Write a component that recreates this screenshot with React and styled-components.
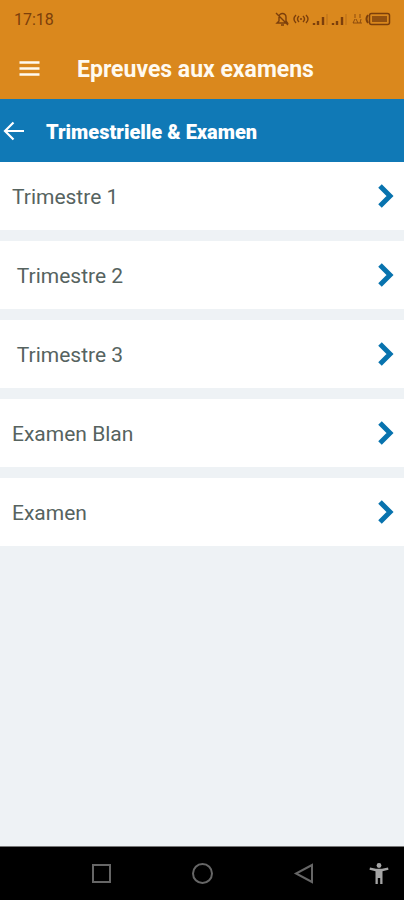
import React from "react";
import styled, { createGlobalStyle } from "styled-components";

const GlobalStyle = createGlobalStyle`
  * {
    box-sizing: border-box;
  }

  body {
    margin: 0;
    font-family: Roboto, "Liberation Sans", sans-serif;
    background-color: #eef2f5;
  }

  button {
    border: 0;
    padding: 0;
    background: none;
    font: inherit;
    color: inherit;
    cursor: pointer;
  }

  svg {
    display: block;
  }
`;

const Screen = styled.div`
  min-height: 100vh;
  display: flex;
  flex-direction: column;
`;

const StatusBar = styled.div`
  height: 38px;
  padding: 0 13px 0 14px;
  display: flex;
  align-items: center;
  justify-content: space-between;
  background-color: #da881d;
  color: #7c3f0b;
`;

const Clock = styled.time`
  padding-top: 2px;
  font-size: 16px;
  line-height: 20px;
`;

const AppBar = styled.header`
  height: 61px;
  padding: 0 18px;
  display: flex;
  align-items: center;
  gap: 36px;
  background-color: #da881d;
  color: #fffaf0;
`;

const IconButton = styled.button`
  flex: none;
  display: flex;
`;

const Title = styled.h1`
  margin: 0;
  padding-top: 2px;
  font-size: 23px;
  line-height: 28px;
  font-weight: 700;
`;

const SubBar = styled.div`
  height: 63px;
  padding: 0 3px;
  display: flex;
  align-items: center;
  gap: 20px;
  background-color: #1079b6;
  color: #fff;
`;

const Subtitle = styled.h2`
  margin: 0;
  padding-top: 2px;
  font-size: 20px;
  line-height: 28px;
  font-weight: 900;
`;

const List = styled.ul`
  flex: 1;
  margin: 0;
  padding: 0;
  list-style: none;
  display: flex;
  flex-direction: column;
  gap: 11px;
`;

const Row = styled.button`
  width: 100%;
  height: 68px;
  padding: 0 10px 0 12px;
  display: flex;
  align-items: center;
  justify-content: space-between;
  background-color: #fff;
  color: #56635f;
  font-size: 21px;
  line-height: 28px;
  text-align: left;
`;

const Label = styled.span`
  padding-top: 2px;
  white-space: pre;
`;

const NavBar = styled.nav`
  height: 54px;
  display: grid;
  grid-template-columns: 2fr 2fr 2fr 1fr;
  padding-left: 12.5%;
  align-items: center;
  justify-items: center;
  border-top: 1px solid #777;
  background-color: #000;
  color: #666;
`;

// some labels come with a leading space, and it shows
const items = [
  "Trimestre 1",
  " Trimestre 2",
  " Trimestre 3",
  "Examen Blan",
  "Examen",
];

const StatusIcons = () => (
  <svg width="117" height="18" viewBox="0 0 117 18" fill="none" stroke="currentColor">
    {/* muted bell */}
    <path d="M3 13h10.500l-1.500-2V7a3.500 3.500 0 0 0-7 0v4zM7 15h3M2 3l12 12" strokeWidth="1.400" />
    {/* vibration */}
    <path d="M22 5q-4 4 0 8M32 5q4 4 0 8M25 6q-3 3 0 6M29 6q3 3 0 6" strokeWidth="1.400" />
    <circle cx="27" cy="9" r="1" fill="currentColor" stroke="none" />
    {/* two signal meters */}
    <path d="M40 15v-2M44 15v-4M49 15V7" strokeWidth="2.400" />
    <path d="M53 15V4" strokeWidth="1" opacity="0.35" />
    <path d="M59 15v-2M63 15v-4M68 15V7" strokeWidth="2.400" />
    <path d="M72 15V4" strokeWidth="1" opacity="0.35" />
    {/* data rate */}
    <path d="M79 13l2-4M84 13l-2-4M81 4v4M86 4v4M86 13l1-4M79 13h9" strokeWidth="1" opacity="0.8" />
    {/* battery */}
    <path d="M94 5q-3 4 0 8" strokeWidth="2" />
    <rect x="95.500" y="3.500" width="20" height="11" rx="2" strokeWidth="1.500" />
    <rect x="98" y="6" width="15" height="6" fill="currentColor" stroke="none" opacity="0.75" />
  </svg>
);

const MenuIcon = () => (
  <svg width="23" height="18" viewBox="0 0 23 18" stroke="currentColor" strokeWidth="2.400">
    <path d="M1.500 2.500h20M1.500 8.500h20M1.500 14.500h20" />
  </svg>
);

const BackIcon = () => (
  <svg width="23" height="22" viewBox="0 0 23 22" fill="none" stroke="currentColor" strokeWidth="2.200">
    <path d="M21 11H2.500M10.500 2.500L2 11l8.500 8.500" />
  </svg>
);

const ChevronIcon = () => (
  <svg width="18" height="26" viewBox="0 0 18 26" fill="none" stroke="#0873ae" strokeWidth="5">
    <path d="M4 3l10 10L4 23" />
  </svg>
);

const RecentsIcon = () => (
  <svg width="24" height="24" viewBox="0 0 24 24" fill="none" stroke="currentColor" strokeWidth="2">
    <rect x="4" y="3" width="17" height="17" />
  </svg>
);

const HomeIcon = () => (
  <svg width="24" height="24" viewBox="0 0 24 24" fill="none" stroke="currentColor" strokeWidth="2">
    <circle cx="12.500" cy="11.500" r="9.500" />
  </svg>
);

const PreviousIcon = () => (
  <svg width="24" height="24" viewBox="0 0 24 24" fill="none" stroke="currentColor" strokeWidth="2">
    <path d="M21 3v17L5 11.500z" />
  </svg>
);

const AccessibilityIcon = () => (
  <svg width="24" height="24" viewBox="0 0 24 24" fill="#a5a5a5">
    <circle cx="12" cy="3.500" r="2.400" />
    <path d="M3 5.500l6 1.300h6l6-1.300.5 2.200L15.500 9.200V22h-2.300v-6h-2.400v6H8.500V9.200l-6-1.500z" />
  </svg>
);

const App = () => {
  return (
    <Screen>
      <GlobalStyle />
      <StatusBar>
        <Clock>17:18</Clock>
        <StatusIcons />
      </StatusBar>
      <AppBar>
        <IconButton aria-label="Menu">
          <MenuIcon />
        </IconButton>
        <Title>Epreuves aux examens</Title>
      </AppBar>
      <SubBar>
        <IconButton aria-label="Retour">
          <BackIcon />
        </IconButton>
        <Subtitle>Trimestrielle &amp; Examen</Subtitle>
      </SubBar>

      <List>
        {items.map((item) => (
          <li key={item}>
            <Row>
              <Label>{item}</Label>
              <ChevronIcon />
            </Row>
          </li>
        ))}
      </List>

      <NavBar>
        <IconButton aria-label="Applications récentes">
          <RecentsIcon />
        </IconButton>
        <IconButton aria-label="Accueil">
          <HomeIcon />
        </IconButton>
        <IconButton aria-label="Précédent">
          <PreviousIcon />
        </IconButton>
        <IconButton aria-label="Accessibilité">
          <AccessibilityIcon />
        </IconButton>
      </NavBar>
    </Screen>
  );
};

export default App;
